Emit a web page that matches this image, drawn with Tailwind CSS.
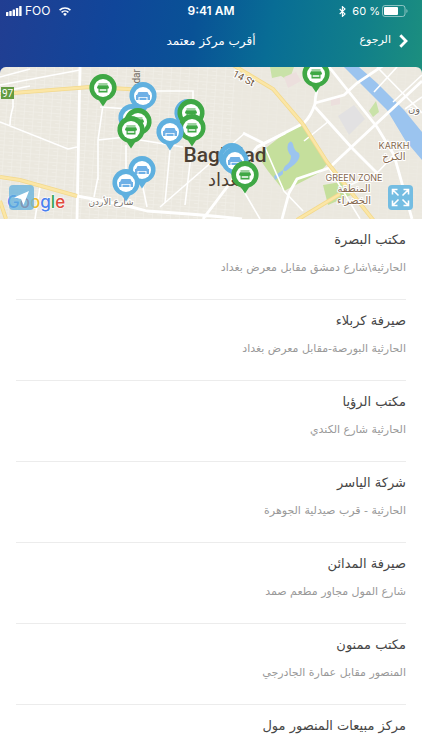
<!DOCTYPE html>
<html lang="ar" dir="rtl">
  <head>
    <meta charset="UTF-8" />
    <meta name="viewport" content="width=device-width, initial-scale=1.0" />
    <title>أقرب مركز معتمد</title>
    <script src="https://cdn.jsdelivr.net/npm/@tailwindcss/browser@4"></script>
  </head>
  <body class="bg-white font-['DejaVu_Sans',sans-serif]">

    <div class="bg-[linear-gradient(100deg,#213e92_0%,#10469a_25%,#095296_43%,#086d95_60%,#117f8a_80%,#20957a_100%)]">
      <!-- Status bar -->
      <div dir="ltr" class="grid grid-cols-3 items-center h-[22px] px-1.5 text-white text-xs font-['Inter',sans-serif]">
        <div class="flex items-center gap-[3px]">
          <svg class="w-4 h-[10px]" viewBox="0 0 16 10" fill="currentColor">
            <rect x="0" y="6" width="2.4" height="4" rx=".6" />
            <rect x="3.3" y="5" width="2.4" height="5" rx=".6" />
            <rect x="6.6" y="3.5" width="2.4" height="6.5" rx=".6" />
            <rect x="9.9" y="2" width="2.4" height="8" rx=".6" />
            <rect x="13.2" y="0" width="2.4" height="10" rx=".6" />
          </svg>
          <span>FOO</span>
          <svg class="w-3 h-[9px] ml-1.5" viewBox="0 0 12 9" fill="none" stroke="currentColor" stroke-width="1.6">
            <path d="M.6 3.2a7.8 7.8 0 0 1 10.8 0" />
            <path d="M2.6 5.3a5 5 0 0 1 6.8 0" />
            <path d="M6 9 4.1 7a2.8 2.8 0 0 1 3.8 0z" fill="currentColor" stroke="none" />
          </svg>
        </div>
        <div class="text-center font-semibold">9:41 AM</div>
        <div class="flex items-center justify-end gap-0.5 pr-2">
          <svg class="w-[7px] h-[11px] mr-1" viewBox="0 0 7 11" fill="none" stroke="currentColor" stroke-width="1.1">
            <path d="M.7 3 6 8 3.4 10.4V.6L6 3 .7 8" />
          </svg>
          <span class="text-[11px]">60 %</span>
          <svg class="w-[26px] h-3" viewBox="0 0 26 12">
            <rect x=".5" y=".5" width="22.5" height="11" rx="2.5" fill="none" stroke="#fff" stroke-opacity=".5" />
            <rect x="2" y="2" width="14" height="8" rx="1" fill="#fff" />
            <path d="M24.5 4v4c1.3-.6 1.3-3.4 0-4z" fill="#fff" fill-opacity=".6" />
          </svg>
        </div>
      </div>

      <!-- Nav bar -->
      <header class="grid grid-cols-3 items-center h-[45px] px-3.5 pb-2 text-white">
        <button type="button" class="flex items-center gap-2 text-[11px]">
          <svg class="w-[9px] h-[14px]" viewBox="0 0 9 14" fill="none" stroke="currentColor" stroke-width="2.8">
            <path d="M1.3 1.2 7 7l-5.7 5.8" />
          </svg>
          الرجوع
        </button>
        <h1 class="text-xs text-center whitespace-nowrap">أقرب مركز معتمد</h1>
      </header>

      <!-- Map -->
      <section class="relative overflow-hidden rounded-t-md h-[152px] bg-[#ebe8df]">
        <svg class="block w-full h-full" viewBox="0 0 422 152" preserveAspectRatio="xMidYMid slice" direction="ltr">
          <defs>
            <pattern id="streets" width="9" height="7" patternUnits="userSpaceOnUse" patternTransform="rotate(4)">
              <path d="M0 .5h9M.5 0v7M5 3.5h4" stroke="#f5f3ee" stroke-width=".6" fill="none" />
            </pattern>
            <g id="pin">
              <path d="M0 18.5-4 12.6A13.6 13.6 0 1 1 4 12.6z" />
              <circle r="9" fill="#fff" />
            </g>
            <g id="shop">
              <use href="#pin" fill="#3fa845" />
              <path d="M-4.500-4.500h9v1h-9zM-5-2.800H5L6-.5q0 1.200-1.500 1.200V4.500h-9V.7Q-6 .7-6-.5z" fill="#3fa845" />
              <path d="M-3.300 1.200h6.600v1.500h-6.600z" fill="#fff" />
            </g>
            <g id="office">
              <use href="#pin" fill="#5fb0df" />
              <path d="M-4.500-4H4.500L6-1h1v5H4.500V1h-9v3H-7v-5h1z" fill="#6fb0e6" />
              <path d="M-3.500 1.800h7V4h-7z" fill="#6fb0e6" />
            </g>
          </defs>

          <rect width="235" height="152" fill="url(#streets)" opacity=".7" />
          <rect x="235" width="187" height="152" fill="url(#streets)" opacity=".25" />

          <!-- parks, grey blocks -->
          <path d="M257 88 285 66 305 57 328 96 319 106 284 124 268 104z" fill="#c5df9c" />
          <path d="M323 118 341 115 351 128 328 138z" fill="#c5df9c" />
          <path d="M369 44 376 34 379 45 373 50zM270 0h24l-5 14-8-5-9 2z" fill="#c9e2a8" />
          <path d="M338 49 354 38 365 52 349 68z" fill="#e2e1e2" />
          <path d="M284 10 296 5 301 14 288 21zM331 31l9-2 0 8-9 2z" fill="#ecdfdd" />

          <!-- water -->
          <path d="M344 0H359L377 16 404 43 422 65V93L405 73 387 43 360 16z" fill="#9bc4ef" />
          <path d="M288 77q3-5 5 0 1 7 6 9 2 5-4 11-4 3-9 7-5 1-1-5 6-4 6-10-5-6-3-12zM274 109l9-6 0 4-8 6z" fill="#9bc4ef" />

          <!-- minor roads -->
          <g fill="none" stroke="#fff" stroke-width="1.6">
            <path d="M0 10 30 2M0 18 80 3M0 25 30 19M13 28v12q-3 10-3 18M0 55 68 82 77 80M40 120 35 152" />
            <path d="M103 38 98 73v40M100 40l45 3M98 73l28-3M126 78v24M140 24h53v12M140 73l43 7M170 83l-5 53M192 80l-7 58M142 116l5 24M98 110l-4 20" />
            <path d="M232 104 260 152M245 66 160 140M263 76 284 124 303 144M377 0 422 46M397 0 374 25M422 8 393 35M405 42 422 30M329 101 360 152M304 74 329 54M377 106 394 88M350 118 377 106" />
          </g>

          <!-- main roads -->
          <g fill="none" stroke="#fff" stroke-width="2.8">
            <path d="M80 0 77 152M77 129q40 7 70 15 50 3 95 8M203 152 257 80 285 66M243 66 263 76" />
            <path d="M317 23q-2 8-2 14-4 12-11 19L257 80M315 36l29-8 13-12L384-2" />
            <path d="M329 0 377 60 394 88 412 152M315 40 352 81 377 106M329 101 422 14M282 152 289 126 297 112 329 101" />
          </g>

          <!-- highways -->
          <g fill="none" stroke="#f3d98c" stroke-width="4">
            <path d="M0 27 90 20 128 22 145 24M0 110 20 113 77 129M0 134 6 152M233-2 273 22 302 56 327 95 374 154M297 153 340 127" />
          </g>
          <g fill="none" stroke="#fbe6a6" stroke-width="2.4">
            <path d="M0 27 90 20 128 22 145 24M0 110 20 113 77 129M0 134 6 152M233-2 273 22 302 56 327 95 374 154M297 153 340 127" />
          </g>

          <!-- labels -->
          <rect x="1" y="20" width="13" height="12" fill="#639b41" />
          <text x="7.5" y="30" text-anchor="middle" class="text-[10px] fill-white font-['Roboto',sans-serif]">97</text>
          <text transform="translate(140 22) rotate(-90)" class="text-[10px] fill-[#77706a] font-['Roboto',sans-serif]">adar</text>
          <text transform="translate(232 9) rotate(27)" class="text-[10px] fill-[#6f5640] font-['Roboto',sans-serif]" stroke="#fff" stroke-width="2" paint-order="stroke">14 St</text>
          <text x="225" y="95" text-anchor="middle" class="text-[21px] font-medium fill-[#4b3f33] font-['Roboto',sans-serif]">Baghdad</text>
          <text x="226" y="119" text-anchor="middle" class="text-[18px] fill-[#4b3f33]">بغداد</text>
          <g text-anchor="middle" class="text-[10px] fill-[#86694f] font-['Inter','DejaVu_Sans',sans-serif]" stroke="#fff" stroke-width="2" paint-order="stroke">
            <text x="394" y="82" class="text-[9px]">KARKH</text>
            <text x="394" y="93">الكرخ</text>
            <text x="354" y="114" class="text-[9px]">GREEN ZONE</text>
            <text x="354" y="125">المنطقة</text>
            <text x="354" y="137">الخضراء</text>
            <text x="111" y="138" class="text-[9px] fill-[#77706a]">شارع الأردن</text>
            <text x="414" y="45" class="fill-[#77706a]">ون</text>
          </g>
          <text x="7" y="141" class="text-[17px] font-medium font-['Inter',sans-serif]" stroke="#fff" stroke-width="1" paint-order="stroke"><tspan fill="#4a80ee">G</tspan><tspan fill="#e04a3c">o</tspan><tspan fill="#eebd2c">o</tspan><tspan fill="#4a80ee">g</tspan><tspan fill="#35a553">l</tspan><tspan fill="#e04a3c">e</tspan></text>

          <!-- pins -->
          <use href="#office" x="143" y="29" />
          <use href="#shop" x="103" y="21" />
          <use href="#office" x="132" y="51" />
          <use href="#shop" x="138" y="55" />
          <use href="#shop" x="131" y="63" />
          <use href="#office" x="188" y="46" />
          <use href="#shop" x="191" y="46" />
          <use href="#shop" x="192" y="61" />
          <use href="#office" x="170" y="65" />
          <use href="#office" x="142" y="103" />
          <use href="#office" x="126" y="116" />
          <use href="#office" x="232" y="90" />
          <use href="#office" x="235" y="94" />
          <use href="#shop" x="245" y="108" />
          <use href="#shop" x="316" y="7" />
        </svg>

        <!-- Map controls -->
        <button type="button" aria-label="موقعي" class="absolute left-[9px] bottom-[9px] size-[25px] rounded bg-[#62b0dc]/75">
          <svg class="size-full" viewBox="0 0 25 25" fill="#fff"><path d="M20 6 14.5 20 12 14 5 12.5z" /></svg>
        </button>
        <button type="button" aria-label="ملء الشاشة" class="absolute right-[9px] bottom-[9px] size-[25px] rounded bg-[#74bde2]">
          <svg class="size-full" viewBox="0 0 25 25" fill="none" stroke="#fff" stroke-width="1.6">
            <path d="M5 5l5.5 5.5M20 5l-5.5 5.5M5 20l5.5-5.5M20 20l-5.5-5.5M4.5 9.5v-5h5M15.5 4.5h5v5M4.5 15.5v5h5M15.5 20.5h5v-5" />
          </svg>
        </button>
      </section>
    </div>

    <!-- Centers list -->
    <main class="px-4">
      <ul class="divide-y divide-[#ececec]">
        <li class="pt-[9px] pb-[21px]">
          <h2 class="text-[13px] leading-6 text-[#454545]">مكتب البصرة</h2>
          <p class="mt-1.5 text-[11px] leading-5 text-[#999999]">الحارثية\شارع دمشق مقابل معرض بغداد</p>
        </li>
        <li class="pt-[9px] pb-[21px]">
          <h2 class="text-[13px] leading-6 text-[#454545]">صيرفة كربلاء</h2>
          <p class="mt-1.5 text-[11px] leading-5 text-[#999999]">الحارثية البورصة-مقابل معرض بغداد</p>
        </li>
        <li class="pt-[9px] pb-[21px]">
          <h2 class="text-[13px] leading-6 text-[#454545]">مكتب الرؤيا</h2>
          <p class="mt-1.5 text-[11px] leading-5 text-[#999999]">الحارثية شارع الكندي</p>
        </li>
        <li class="pt-[9px] pb-[21px]">
          <h2 class="text-[13px] leading-6 text-[#454545]">شركة الياسر</h2>
          <p class="mt-1.5 text-[11px] leading-5 text-[#999999]">الحارثية - قرب صيدلية الجوهرة</p>
        </li>
        <li class="pt-[9px] pb-[21px]">
          <h2 class="text-[13px] leading-6 text-[#454545]">صيرفة المدائن</h2>
          <p class="mt-1.5 text-[11px] leading-5 text-[#999999]">شارع المول مجاور مطعم صمد</p>
        </li>
        <li class="pt-[9px] pb-[21px]">
          <h2 class="text-[13px] leading-6 text-[#454545]">مكتب ممنون</h2>
          <p class="mt-1.5 text-[11px] leading-5 text-[#999999]">المنصور مقابل عمارة الجادرجي</p>
        </li>
        <li class="pt-[9px]">
          <h2 class="text-[13px] leading-6 text-[#454545]">مركز مبيعات المنصور مول</h2>
        </li>
      </ul>
    </main>

  </body>
</html>
